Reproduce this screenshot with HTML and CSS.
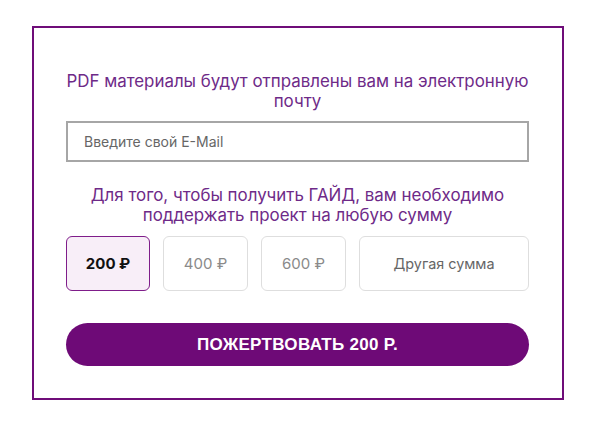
FILE: index.html
```html
<!DOCTYPE html>
<html lang="ru">
<head>
<meta charset="utf-8">
<link rel="stylesheet" href="styles.css">
</head>
<body>
<div class="frame">
  <p class="note">PDF материалы будут отправлены вам на электронную почту</p>
  <div class="input"><span class="placeholder">Введите свой E-Mail</span></div>
  <p class="note note-2">Для того, чтобы получить ГАЙД, вам необходимо поддержать проект на любую сумму</p>
  <div class="amounts">
    <div class="amount selected">200 ₽</div>
    <div class="amount">400 ₽</div>
    <div class="amount">600 ₽</div>
    <div class="amount other">Другая сумма</div>
  </div>
  <div class="donate">ПОЖЕРТВОВАТЬ 200 Р.</div>
</div>
</body>
</html>
```

FILE: styles.css
```css
* { box-sizing: border-box; }
html, body { margin: 0; background: #fff; }
body {
  width: 595px;
  height: 427px;
  padding: 26px 0 0 32px;
  font-family: Inter, "Noto Sans", sans-serif;
}
.frame {
  width: 532px;
  height: 374px;
  border: 2px solid #6f0d79;
  padding: 44px 33px 0 32px;
  display: flex;
  flex-direction: column;
}
.note {
  margin: 0;
  text-align: center;
  color: #6e2a88;
  font-size: 16.9px;
  line-height: 19.5px;
}
.input {
  margin-top: 10px;
  height: 41px;
  border: 2px solid #a6a6a6;
  display: flex;
  align-items: center;
  padding-left: 16px;
}
.placeholder {
  color: #666;
  font-size: 14px;
}
.note-2 { margin-top: 24px; }
.amounts {
  margin-top: 11px;
  display: flex;
  gap: 13px;
}
.amount {
  width: 85px;
  height: 55px;
  border: 1px solid #dedede;
  border-radius: 6px;
  display: flex;
  align-items: center;
  justify-content: center;
  color: #8a8a8a;
  font-size: 15px;
}
.amount.selected {
  width: 84px;
  background: #f8eef8;
  border-color: #7f1d8a;
  color: #111;
  font-weight: 700;
}
.amount.other {
  flex: 1;
  color: #666;
  font-size: 14.4px;
}
.donate {
  margin-top: 32px;
  height: 43px;
  border-radius: 22px;
  background: #6e0a77;
  color: #fff;
  font-family: "Liberation Sans", Arial, sans-serif;
  font-weight: 700;
  font-size: 17px;
  letter-spacing: 0.3px;
  display: flex;
  align-items: center;
  justify-content: center;
}
```
